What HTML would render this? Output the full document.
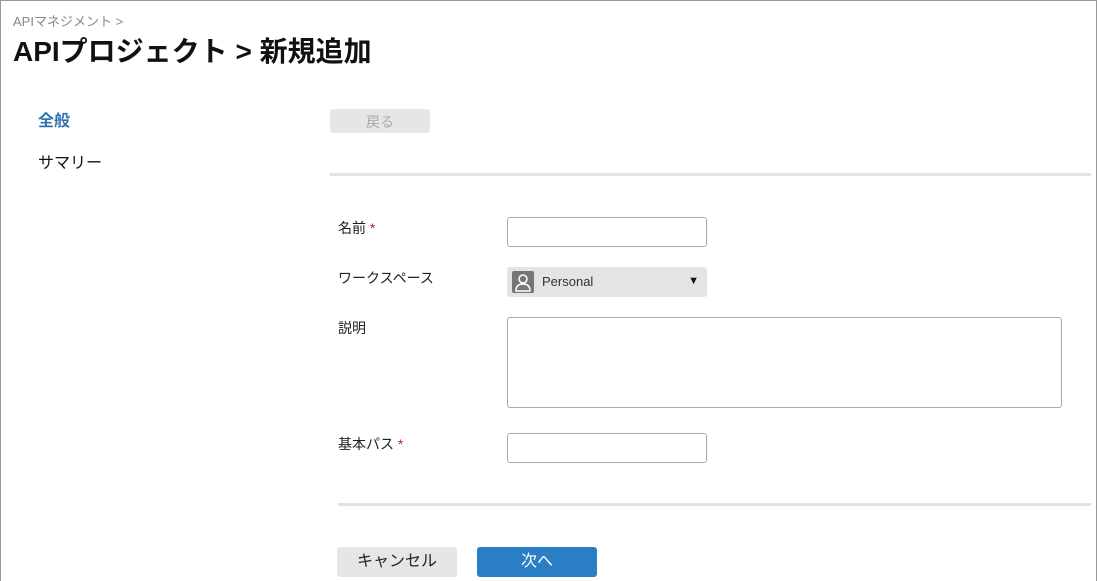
<!DOCTYPE html>
<html><head><meta charset="utf-8"><style>
*{box-sizing:border-box;margin:0;padding:0}
body{width:1098px;height:581px;overflow:hidden;background:#fff;font-family:"Liberation Sans","Noto Sans CJK JP",sans-serif;position:relative}
.frame{position:absolute;left:0;top:0;width:1097px;height:581px;border:1px solid #999;border-bottom:none}
.a{position:absolute;white-space:nowrap}
.inp{position:absolute;border:1px solid #aaa;border-radius:3px;background:#fff}
.sep{position:absolute;height:3px;background:#e2e2e2}
.lbl{font-size:14px;color:#222}
.req{color:#c0183a}
</style></head><body>
<div class="frame"></div>
<div class="a" style="left:13px;top:11px;font-size:13px;color:#888">APIマネジメント &gt;</div>
<div class="a" style="left:13px;top:30px;font-size:28px;font-weight:bold;color:#111">APIプロジェクト &gt; 新規追加</div>
<div class="a" style="left:38px;top:107px;font-size:16px;font-weight:bold;color:#2e72b0">全般</div>
<div class="a" style="left:38px;top:149px;font-size:16px;color:#111">サマリー</div>
<div class="a" style="left:330px;top:109px;width:100px;height:24px;background:#e6e6e6;border-radius:3px;color:#aaa;font-size:14px;text-align:center;line-height:26px">戻る</div>
<div class="sep" style="left:330px;top:173px;width:761px"></div>
<div class="a lbl" style="left:338px;top:218px">名前 <span class="req">*</span></div>
<div class="inp" style="left:507px;top:217px;width:200px;height:30px"></div>
<div class="a lbl" style="left:338px;top:268px">ワークスペース</div>
<div class="a" style="left:507px;top:267px;width:200px;height:30px;background:#e4e4e4;border-radius:3px">
<div style="position:absolute;left:5px;top:4px;width:22px;height:22px;background:#777;border-radius:2px">
<svg width="22" height="22" viewBox="0 0 22 22"><circle cx="11" cy="8" r="4" fill="none" stroke="#fff" stroke-width="1.5"/><path d="M4 20 Q4 13 11 13 Q18 13 18 20 Z" fill="none" stroke="#fff" stroke-width="1.5"/></svg></div>
<div style="position:absolute;left:35px;top:7px;font-size:13px;color:#333">Personal</div>
<div style="position:absolute;right:8px;top:8px;font-size:11px;color:#111">▼</div>
</div>
<div class="a lbl" style="left:338px;top:318px">説明</div>
<div class="inp" style="left:507px;top:317px;width:555px;height:91px"></div>
<div class="a lbl" style="left:338px;top:434px">基本パス <span class="req">*</span></div>
<div class="inp" style="left:507px;top:433px;width:200px;height:30px"></div>
<div class="sep" style="left:338px;top:503px;width:753px"></div>
<div class="a" style="left:337px;top:547px;width:120px;height:30px;background:#e6e6e6;border-radius:3px;font-size:16px;color:#222;text-align:center;line-height:30px">キャンセル</div>
<div class="a" style="left:477px;top:547px;width:120px;height:30px;background:#2a7fc4;border-radius:3px;font-size:16px;color:#fff;text-align:center;line-height:30px">次へ</div>
</body></html>
